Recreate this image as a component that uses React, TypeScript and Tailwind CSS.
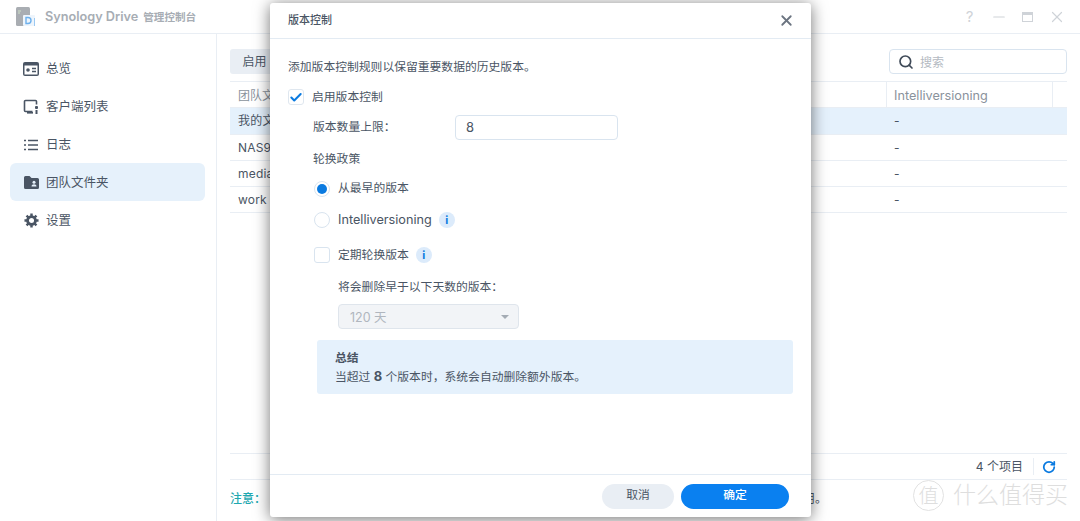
import { Check, Minus, RotateCw, Search, X } from 'lucide-react';

const font = { fontFamily: 'Inter, "Noto Sans CJK SC", sans-serif' };

const navItems = ['总览', '客户端列表', '日志', '团队文件夹', '设置'];
const rows = ['我的文件', 'NAS9', 'media', 'work'];

function NavIcon({ index }: { index: number }) {
  if (index === 0) {
    return (
      <svg width="16" height="14" viewBox="0 0 16 14" fill="none">
        <rect width="16" height="14" rx="2" fill="#4a5564" />
        <rect x="1.5" y="3.5" width="13" height="9" fill="#fff" />
        <circle cx="5" cy="8" r="1.8" fill="#4a5564" />
        <path d="M9 6.5h4M9 9.5h4" stroke="#4a5564" strokeWidth="1.3" />
      </svg>
    );
  }
  if (index === 1) {
    return (
      <svg width="16" height="16" viewBox="0 0 16 16" fill="none">
        <path d="M9.5 12.5H2.5a1 1 0 0 1-1-1V2.5a1 1 0 0 1 1-1h10a1 1 0 0 1 1 1v3" stroke="#4a5564" strokeWidth="1.6" />
        <rect x="4" y="13" width="6" height="1.6" fill="#4a5564" />
        <rect x="12" y="7" width="3" height="3" rx="1" fill="#4a5564" />
        <rect x="12.5" y="11" width="2" height="4" fill="#4a5564" />
      </svg>
    );
  }
  if (index === 2) {
    return (
      <svg width="14" height="12" viewBox="0 0 14 12" fill="none">
        <path d="M0 1.5h2M4 1.5h10M0 6h2M4 6h10M0 10.5h2M4 10.5h10" stroke="#4a5564" strokeWidth="1.3" />
      </svg>
    );
  }
  if (index === 3) {
    return (
      <svg width="15" height="13" viewBox="0 0 15 13" fill="none">
        <path d="M0 1.5A1.5 1.5 0 0 1 1.5 0h4L7.5 2h6A1.5 1.5 0 0 1 15 3.5v8a1.5 1.5 0 0 1-1.5 1.5h-12A1.5 1.5 0 0 1 0 11.5z" fill="#4a5564" />
        <circle cx="10" cy="6.3" r="1.5" fill="#e6f1fb" />
        <path d="M7.5 10.5c0-1.5 1.2-2.2 2.5-2.2s2.5.7 2.5 2.2z" fill="#e6f1fb" />
      </svg>
    );
  }
  return (
    <svg width="15" height="15" viewBox="0 0 16 16" fill="none">
      <circle cx="8" cy="8" r="4.2" stroke="#4a5564" strokeWidth="3" />
      <path d="M8 0.5v3M8 12.5v3M0.5 8h3M12.5 8h3M2.7 2.7l2.1 2.1M11.2 11.2l2.1 2.1M2.7 13.3l2.1-2.1M11.2 4.8l2.1-2.1" stroke="#4a5564" strokeWidth="2.6" />
    </svg>
  );
}

function InfoDot() {
  return (
    <span className="-ml-px flex h-4 w-4 items-center justify-center rounded-full bg-[#dcebfb] text-[11px] font-bold leading-none text-[#0a7ae0]">
      i
    </span>
  );
}

function Sidebar() {
  return (
    <nav className="flex w-[217px] shrink-0 flex-col border-r border-[#e9eef4] pl-[10px] pr-[11px] pt-[15px]">
      {navItems.map((item, i) => (
        <div
          key={item}
          className={`flex h-[38px] items-center gap-[7px] rounded-[6px] pl-[13px] text-[12.5px] text-[#4a5564] ${
            i === 3 ? 'bg-[#e6f1fb]' : ''
          }`}
        >
          <span className="flex w-[16px] justify-center pt-[1px]">
            <NavIcon index={i} />
          </span>
          <span className="pt-[2px]">{item}</span>
        </div>
      ))}
    </nav>
  );
}

function Main() {
  return (
    <main className="flex min-w-0 flex-1 flex-col pl-[13px] pr-[13px] pt-[15px]">
      <div className="flex h-[25px] items-center justify-between">
        <button className="h-[25px] w-[120px] rounded-[3px] bg-[#e9eef4] pr-[71px] pt-[1px] text-[12px] text-[#4a5564]">启用</button>
        <div className="flex h-[25px] w-[178px] items-center gap-[6px] rounded-[4px] border border-[#d9e4ef] pl-[8px] text-[12px] text-[#b4bac2]">
          <Search size={16} color="#3f4a58" strokeWidth={2.5} />
          <span className="pt-[2px]">搜索</span>
        </div>
      </div>
      <div className="mt-[7px] flex h-[27px] items-center border-y border-[#e9eef4] text-[12px] text-[#8a929c]">
        <span className="w-[656px] pl-[8px] pt-[2px]">团队文件夹</span>
        <span className="flex h-full w-[167px] items-center border-x border-[#e9eef4] pl-[7px] pt-[2px] text-[12.7px]">Intelliversioning</span>
      </div>
      {rows.map((row, i) => (
        <div
          key={row}
          className={`flex shrink-0 items-center border-b border-[#e9eef4] text-[12px] tracking-[0.2px] text-[#4a5564] ${
            i === 0 ? 'h-[27px] bg-[#e5f1fc]' : 'h-[26px]'
          }`}
        >
          <span className="w-[657px] pl-[8px]">{row}</span>
          <span className="pl-[7px]">-</span>
        </div>
      ))}
      <div className="flex-1" />
      <div className="flex h-[27px] items-center justify-end border-y border-[#e9eef4] pr-[11px] text-[12px] text-[#4a5564]">
        <span>4 个项目</span>
        <span className="ml-[10px] mr-[8px] h-[17px] w-px bg-[#e9eef4]" />
        <RotateCw size={14} color="#0a7ae0" strokeWidth={3} />
      </div>
      <div className="flex h-[41px] items-center pb-[3px] text-[12px]">
        <span className="font-medium text-[#1fa8b0]">注意：</span>
        <span className="w-[561px] text-right text-[#4a5564]">用。</span>
      </div>
    </main>
  );
}

function Dialog() {
  return (
    <div className="absolute left-[270px] top-[3px] flex h-[514px] w-[541px] flex-col rounded-[3px] bg-white text-[11.8px] text-[#4a5564] shadow-[0_2px_16px_rgba(0,0,0,0.55)]">
      <div className="flex h-[36px] shrink-0 items-center justify-between border-b border-[#e3ebf3] pl-[18px] pr-[16px]">
        <span className="text-[11px] font-medium">版本控制</span>
        <X size={17} color="#6b7480" strokeWidth={2.5} />
      </div>
      <div className="flex flex-1 flex-col pl-[18px] pr-[18px]">
        <p className="mt-[19px] h-[18px] leading-[18px]">添加版本控制规则以保留重要数据的历史版本。</p>
        <label className="mt-[12px] flex h-[18px] items-center gap-[8px]">
          <span className="flex h-4 w-4 items-center justify-center rounded-[3px] border border-[#dfe7ef]">
            <Check size={15} color="#0a7ae0" strokeWidth={3.5} />
          </span>
          <span className="pt-[2px]">启用版本控制</span>
        </label>
        <div className="ml-[25px] mt-[9px] flex h-[25px] items-center">
          <span className="w-[142px]">版本数量上限：</span>
          <div className="flex h-[25px] w-[163px] items-center rounded-[4px] border border-[#d9e4ef] pl-[10px] text-[13px]">8</div>
        </div>
        <div className="ml-[25px] mt-[10px] h-[18px] leading-[18px]">轮换政策</div>
        <div className="ml-[26px] mt-[12px] flex h-[18px] items-center gap-[8px]">
          <span className="flex h-4 w-4 items-center justify-center rounded-full border border-[#d9e4ef]">
            <span className="h-[10px] w-[10px] rounded-full bg-[#0a7ae0]" />
          </span>
          <span>从最早的版本</span>
        </div>
        <div className="ml-[26px] mt-[13px] flex h-[18px] items-center gap-[8px]">
          <span className="h-4 w-4 rounded-full border border-[#d9e4ef]" />
          <span className="text-[12.7px]">Intelliversioning</span>
          <InfoDot />
        </div>
        <div className="ml-[26px] mt-[17px] flex h-[18px] items-center gap-[8px]">
          <span className="h-4 w-4 rounded-[3px] border border-[#d9e4ef]" />
          <span className="pt-[2px]">定期轮换版本</span>
          <InfoDot />
        </div>
        <div className="ml-[50px] mt-[14px] h-[17px] leading-[18px]">将会删除早于以下天数的版本：</div>
        <div className="ml-[50px] mt-[9px] flex h-[25px] w-[181px] items-center justify-between rounded-[4px] border border-[#dfe5ec] bg-[#f2f4f7] pl-[11px] pr-[9px] text-[#b0b6be]">
          <span className="pt-[3px] text-[12.5px]">120 天</span>
          <svg width="8" height="4" viewBox="0 0 8 4">
            <path d="M0 0h8L4 4z" fill="#a4abb4" />
          </svg>
        </div>
        <div className="ml-[29px] mt-[11px] flex h-[54px] w-[476px] flex-col justify-center rounded-[3px] bg-[#e5f1fc] pl-[18px]">
          <span className="pt-[1px] font-semibold leading-[18px]">总结</span>
          <span className="leading-[18px]">
            当超过 <b className="text-[13px]">8</b> 个版本时，系统会自动删除额外版本。
          </span>
        </div>
      </div>
      <div className="flex h-[43px] shrink-0 items-center justify-end gap-[7px] border-t border-[#e3ebf3] pr-[22px]">
        <button className="h-[25px] w-[72px] rounded-full bg-[#e9eef4] text-[#4a5564]">取消</button>
        <button className="h-[25px] w-[108px] rounded-full bg-[#0a80f0] font-medium text-white">确定</button>
      </div>
    </div>
  );
}

export default function App() {
  return (
    <div className="relative flex h-[521px] w-[1080px] flex-col overflow-hidden bg-white" style={font}>
      <header className="flex h-[34px] shrink-0 items-center justify-between border-b border-[#e9eef4] pl-[16px] pr-[9px]">
        <div className="flex items-center gap-[9px]">
          <svg width="20" height="20" viewBox="0 0 20 20" fill="none">
            <rect x="0" y="0" width="14" height="19" rx="1.5" fill="#a9adb2" />
            <path d="M2 4h3M2 6h2" stroke="#cfe0c8" strokeWidth="1" />
            <rect x="7" y="8" width="12" height="11" rx="1" fill="#eef5fc" />
            <path d="M10 10.5h2a3 3 0 0 1 0 6h-2z" stroke="#6db0ec" strokeWidth="1.4" />
            <path d="M18.5 11v8" stroke="#9cc9f2" strokeWidth="1" />
          </svg>
          <span className="flex items-baseline gap-[5px] font-semibold text-[#a7adb4]">
            <span className="text-[12.7px]">Synology Drive</span>
            <span className="text-[10.6px]">管理控制台</span>
          </span>
        </div>
        <div className="flex items-center text-[#cfd3d8]">
          <span className="w-[29px] text-center text-[15px] leading-none">?</span>
          <span className="flex w-[29px] justify-center">
            <Minus size={18} strokeWidth={1.6} />
          </span>
          <span className="flex w-[29px] justify-center">
            <span className="h-[10px] w-[11px] border border-t-[3px] border-[#cfd3d8]" />
          </span>
          <span className="flex w-[29px] justify-center">
            <X size={18} strokeWidth={1.6} />
          </span>
        </div>
      </header>
      <div className="flex min-h-0 flex-1">
        <Sidebar />
        <Main />
      </div>
      <Dialog />
      <div className="absolute bottom-[10px] right-[12px] flex items-center gap-[9px] font-light text-[#dedede]">
        <span className="flex h-[31px] w-[31px] items-center justify-center rounded-full border border-[#e2e2e2] text-[20px]">值</span>
        <span className="text-[23px] leading-none">什么值得买</span>
      </div>
    </div>
  );
}
